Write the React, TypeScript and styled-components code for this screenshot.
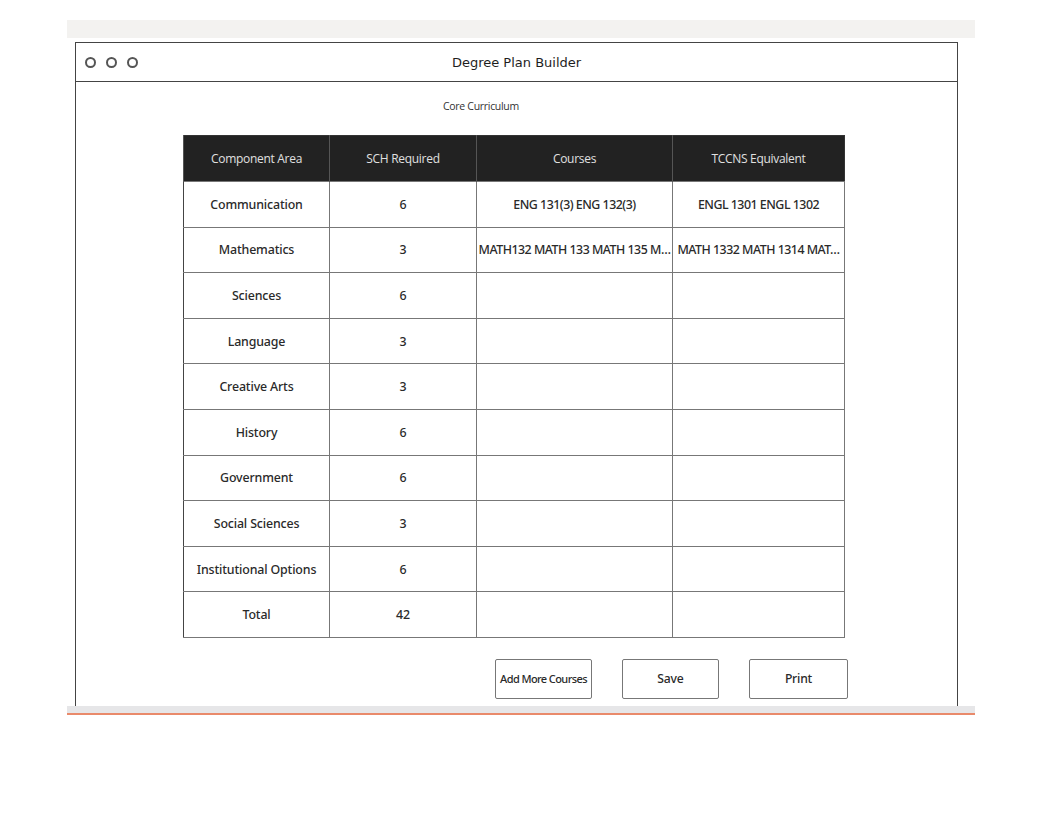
import React from "react";
import styled, { createGlobalStyle } from "styled-components";

type Row = {
  area: string;
  sch: string;
  courses?: string;
  tccns?: string;
};

// long cell values are shown clipped, the way the mockup shows them
const rows: Row[] = [
  {
    area: "Communication",
    sch: "6",
    courses: "ENG 131(3)  ENG 132(3)",
    tccns: "ENGL 1301 ENGL 1302",
  },
  {
    area: "Mathematics",
    sch: "3",
    courses: "MATH132 MATH 133 MATH 135 M…",
    tccns: "MATH 1332 MATH 1314 MAT…",
  },
  { area: "Sciences", sch: "6" },
  { area: "Language", sch: "3" },
  { area: "Creative Arts", sch: "3" },
  { area: "History", sch: "6" },
  { area: "Government", sch: "6" },
  { area: "Social Sciences", sch: "3" },
  { area: "Institutional Options", sch: "6" },
  { area: "Total", sch: "42" },
];

const columns = [
  { title: "Component Area", width: 146 },
  { title: "SCH Required", width: 147 },
  { title: "Courses", width: 196 },
  { title: "TCCNS Equivalent", width: 172 },
];

const App = () => {
  return (
    <>
      <GlobalStyle />
      <Page>
        <TopBar />
        <Window>
          <TitleBar>
            <Dots>
              <Dot />
              <Dot />
              <Dot />
            </Dots>
            <WindowTitle>Degree Plan Builder</WindowTitle>
          </TitleBar>
          <WindowBody>
            <SectionLabel>Core Curriculum</SectionLabel>
            <Table>
              <colgroup>
                {columns.map((c) => (
                  <col key={c.title} style={{ width: c.width }} />
                ))}
              </colgroup>
              <thead>
                <tr>
                  {columns.map((c) => (
                    <HeadCell key={c.title}>{c.title}</HeadCell>
                  ))}
                </tr>
              </thead>
              <tbody>
                {rows.map((r) => (
                  <tr key={r.area}>
                    <Cell>{r.area}</Cell>
                    <Cell>{r.sch}</Cell>
                    <Cell $tight>{r.courses}</Cell>
                    <Cell $tight>{r.tccns}</Cell>
                  </tr>
                ))}
              </tbody>
            </Table>
            <ButtonRow>
              <Button $small>Add More Courses</Button>
              <Button>Save</Button>
              <Button $wide>Print</Button>
            </ButtonRow>
          </WindowBody>
        </Window>
        <BottomStrip />
      </Page>
    </>
  );
};

export default App;

const GlobalStyle = createGlobalStyle`
  body {
    margin: 0;
    background: #ffffff;
    font-family: "Open Sans", "Noto Sans", sans-serif;
    color: #333333;
  }
`;

const Page = styled.div`
  width: 908px;
  margin-left: 67px;
  padding-top: 20px;
  display: flex;
  flex-direction: column;
`;

const TopBar = styled.div`
  height: 18px;
  background: #f3f2f0;
`;

const Window = styled.div`
  margin: 4px 17px 0 8px;
  border: 1.5px solid #444;
  border-bottom: none;
  display: flex;
  flex-direction: column;
`;

const TitleBar = styled.div`
  height: 38px;
  border-bottom: 1.5px solid #444;
  display: flex;
  align-items: center;
  position: relative;
`;

const Dots = styled.div`
  display: flex;
  gap: 10px;
  padding-left: 9px;
  padding-top: 1px;
`;

const Dot = styled.span`
  width: 7px;
  height: 7px;
  border: 2px solid #555;
  border-radius: 50%;
`;

const WindowTitle = styled.div`
  position: absolute;
  left: 0;
  right: 0;
  text-align: center;
  font-family: "DejaVu Sans", sans-serif;
  font-size: 13px;
  color: #1e1e1e;
  padding-top: 1px;
`;

const WindowBody = styled.div`
  height: 624px;
  display: flex;
  flex-direction: column;
  padding-left: 107px;
`;

const SectionLabel = styled.div`
  font-size: 10.5px;
  color: #333;
  margin: 17px 0 0 260px;
  height: 15px;
  letter-spacing: -0.3px;
`;

const Table = styled.table`
  margin-top: 21px;
  width: 661px;
  border-collapse: collapse;
  table-layout: fixed;
  border: 1.5px solid #333;
`;

const HeadCell = styled.th`
  height: 45px;
  background: #222222;
  color: #e0e0e0;
  font-weight: 400;
  font-size: 12px;
  letter-spacing: -0.3px;
  border-left: 1px solid #555;
  text-align: center;
  padding: 0;
`;

const Cell = styled.td<{ $tight?: boolean }>`
  height: 44.6px;
  padding: 0 ${(p) => (p.$tight ? "1px" : "4px")};
  border: 1px solid #777;
  border-left-color: #444;
  text-align: center;
  font-family: "Noto Sans", "Open Sans", sans-serif;
  font-size: 12.4px;
  font-weight: 500;
  letter-spacing: ${(p) => (p.$tight ? "-0.5px" : "-0.15px")};
  color: #2a2a2a;
  white-space: nowrap;
  overflow: hidden;
`;

const ButtonRow = styled.div`
  display: flex;
  gap: 30px;
  margin: 21px 0 0 312px;
`;

const Button = styled.button<{ $small?: boolean; $wide?: boolean }>`
  width: ${(p) => (p.$wide ? "99px" : "97px")};
  height: 40px;
  background: #fff;
  border: 1.5px solid #777;
  border-radius: 2px;
  font-family: "Noto Sans", "Open Sans", sans-serif;
  font-size: ${(p) => (p.$small ? "11px" : "12.2px")};
  letter-spacing: ${(p) => (p.$small ? "-0.6px" : "-0.2px")};
  font-weight: 500;
  color: #2a2a2a;
  padding: 0;
  white-space: nowrap;
`;

const BottomStrip = styled.div`
  height: 7px;
  background: #e6e6e8;
  border-bottom: 2px solid #e98a6b;
`;
